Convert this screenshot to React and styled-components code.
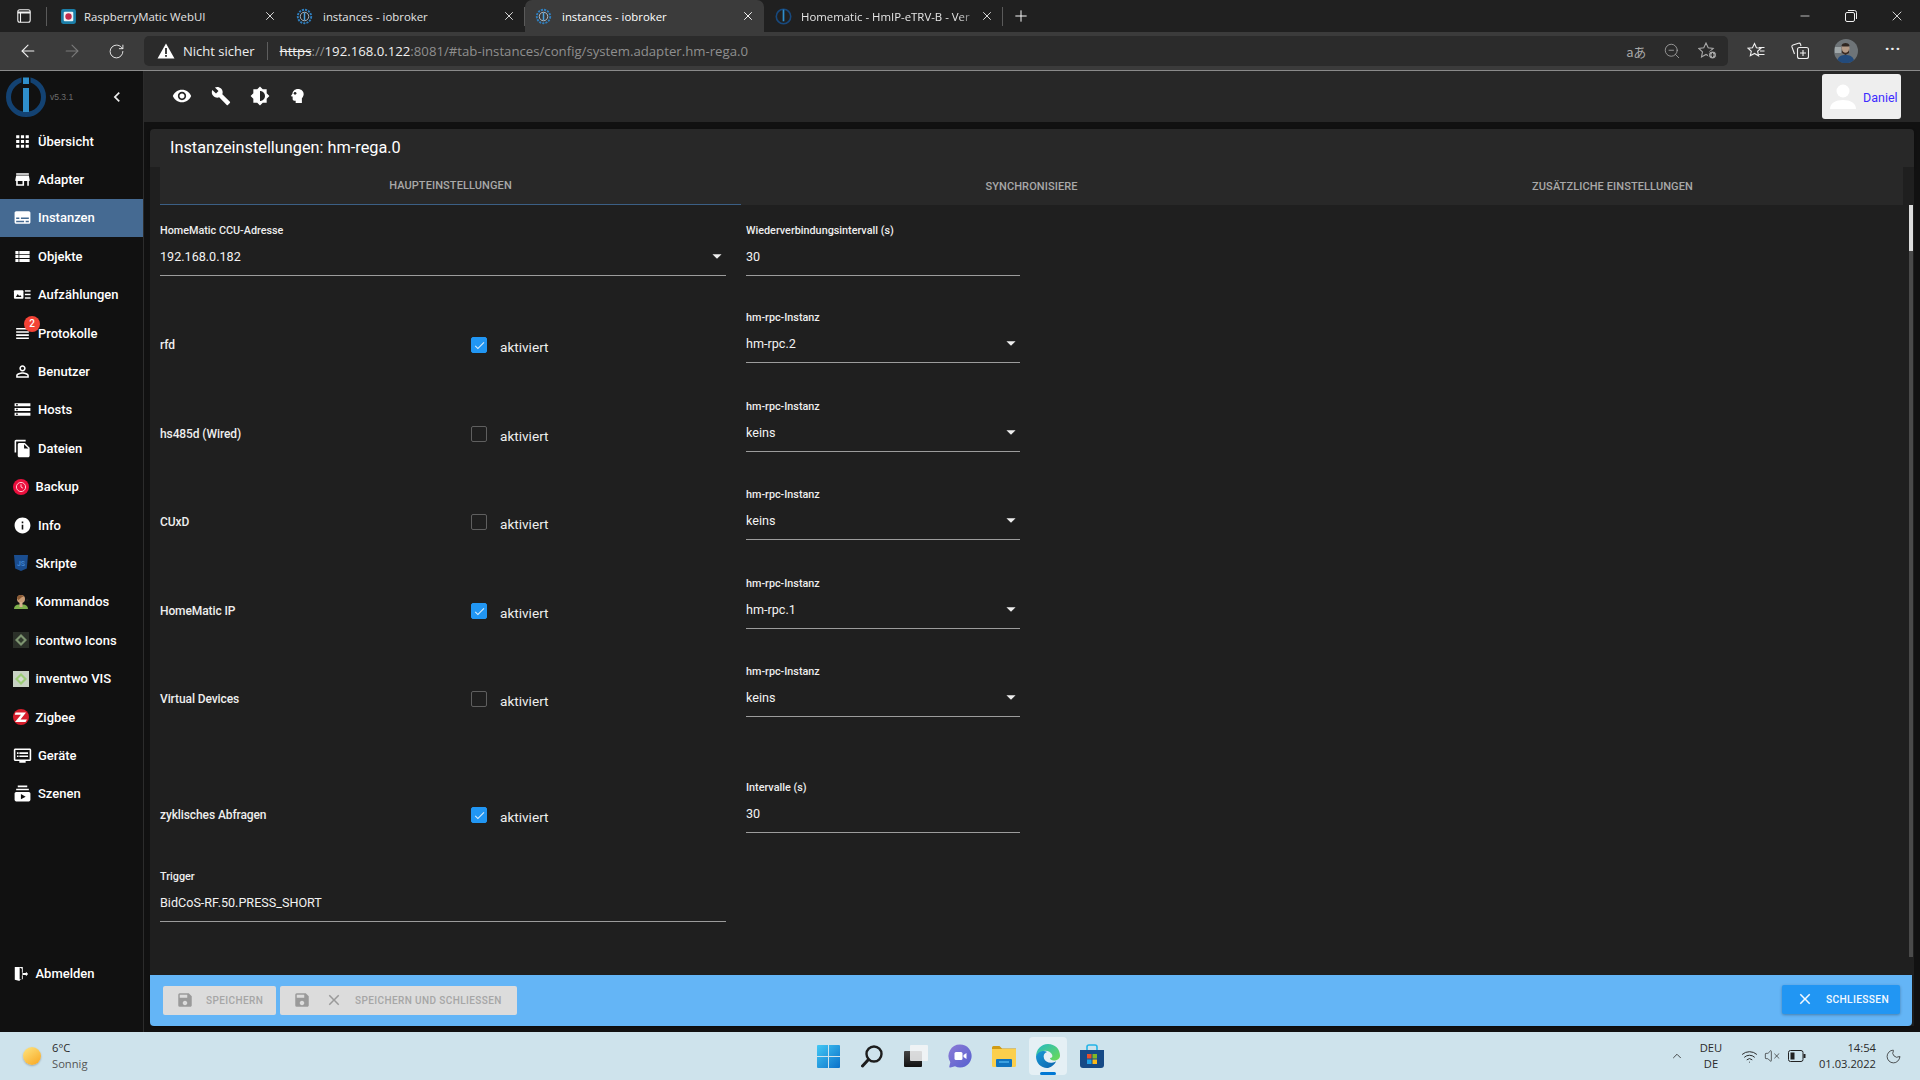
import React from 'react';
import styled, { createGlobalStyle } from 'styled-components';
import {
  MdApps, MdStore, MdSubtitles, MdViewList, MdViewHeadline, MdPersonOutline, MdStorage, MdFileCopy,
  MdInfo, MdDvr, MdSubscriptions, MdVisibility, MdBuild, MdBrightness6, MdSave, MdClose,
  MdArrowDropDown, MdChevronLeft, MdHistory, MdCheck,
} from 'react-icons/md';
import { ArrowLeft, ArrowRight, RotateCw, ZoomOut, Plus, Minus, X, ChevronUp, Wifi, VolumeX, Moon } from 'lucide-react';

const Global = createGlobalStyle`
  html, body { margin: 0; padding: 0; background: #111; }
  * { box-sizing: border-box; }
`;

const Screen = styled.div`
  width: 1920px; height: 1080px; overflow: hidden;
  display: flex; flex-direction: column;
  font-family: Roboto, "Liberation Sans", sans-serif; color: #fff; background: #111;
`;

/* ---------- browser chrome ---------- */
const TabStrip = styled.div`
  height: 32px; display: flex; align-items: stretch; background: #202020; flex: none;
  font-family: "Open Sans", sans-serif; font-size: 11.4px;
`;
const WindowMenu = styled.div`
  width: 47px; display: flex; align-items: center; justify-content: center; position: relative;
  &::after { content: ""; position: absolute; right: 0; top: 7px; height: 19px; width: 1px; background: #5a5a5a; }
`;
const Tab = styled.div`
  width: 239px; display: flex; align-items: center; padding: 0 9px 0 ${p => p.$pad || 13}px; position: relative;
  background: ${p => (p.$active ? '#3b3b3b' : 'transparent')};
  border-radius: ${p => (p.$active ? '7px 7px 0 0' : '0')};
  color: ${p => (p.$active ? '#fff' : '#e4e4e4')};
  &::after { content: ""; display: ${p => (p.$sep ? 'block' : 'none')}; position: absolute; right: 0; top: 7px; height: 19px; width: 1px; background: #5a5a5a; }
`;
const Favicon = styled.svg`width: 17px; height: 17px; flex: none;`;
const TabTitle = styled.span`
  flex: 1; margin-left: ${p => p.$ml || 10}px; white-space: nowrap; overflow: hidden;
  mask-image: ${p => (p.$fade ? 'linear-gradient(to right,#000 88%,transparent 100%)' : 'none')};
`;
const TabClose = styled(X)`width: 14px; height: 14px; flex: none; margin-right: 0; stroke-width: 1.6;`;
const NewTab = styled(Plus)`width: 18px; height: 18px; margin: 7px 0 0 9px; stroke-width: 1.3;`;
const WindowControls = styled.div`margin-left: auto; display: flex;`;
const WindowButton = styled.div`width: 46px; display: flex; align-items: center; justify-content: center;`;

const BrowserBar = styled.div`
  height: 39px; flex: none; display: flex; align-items: flex-start; padding: 4px 6px 0;
  background: #3b3b3b; border-bottom: 1px solid #8a8a8a; font-family: "Open Sans", sans-serif;
`;
const NavButton = styled.div`
  width: 44px; height: 30px; flex: none; display: flex; align-items: center; justify-content: center;
  margin-left: ${p => p.$ml || 0}px;
  color: ${p => (p.$off ? '#7a7a7a' : '#f0f0f0')};
`;
const AddressBar = styled.div`
  width: 1584px; height: 30px; flex: none; margin: 0 6px; background: #2b2b2b; border-radius: 5px;
  display: flex; align-items: center; padding-left: 13px; font-size: 13px;
`;
const SecurityText = styled.span`margin-left: 8px; color: #eee;`;
const AddressDivider = styled.span`width: 1px; height: 18px; background: #5e5e5e; margin: 0 12px;`;
const Url = styled.span`color: #8f8f8f; white-space: nowrap; font-size: 13.2px;`;
const UrlStrong = styled.span`color: #f0f0f0;`;
const UrlStrike = styled.span`color: #f0f0f0; text-decoration: line-through;`;
const AddressIcons = styled.div`margin-left: auto; display: flex; margin-right: 2px; color: #a8a8a8;`;
const AddressIcon = styled.div`width: 36px; height: 30px; display: flex; align-items: center; justify-content: center;`;
const TranslateGlyph = styled.span`font-family: "Noto Sans CJK JP", "Open Sans", sans-serif; font-size: 13px; letter-spacing: -.5px;`;
const Dots = styled.span`font-size: 15px; letter-spacing: 1px; font-weight: 700; margin-top: -7px;`;

/* ---------- ioBroker shell ---------- */
const AppRow = styled.div`flex: 1; min-height: 0; display: flex; background: #111;`;
const Sidebar = styled.nav`
  width: 144px; flex: none; background: #111; border-right: 1px solid #2c2c2c;
  display: flex; flex-direction: column; padding-bottom: 39px;
`;
const Brand = styled.div`height: 51px; flex: none; display: flex; align-items: center; padding-left: 6px; position: relative;`;
const Version = styled.span`font-size: 8.5px; color: #6d6d6d; margin-left: 4px; font-family: "Liberation Sans", sans-serif;`;
const Collapse = styled(MdChevronLeft)`width: 20px; height: 20px; margin-left: 34px; color: #eee;`;
const NavItem = styled.div`
  height: 38.4px; flex: none; display: flex; align-items: center;
  padding-left: ${p => (p.$image ? 13 : 13)}px; font-size: 13px; font-weight: 500; position: relative; white-space: nowrap;
  margin-top: ${p => (p.$bottom ? 'auto' : '0')};
  background: ${p => (p.$active ? '#456a92' : 'transparent')};
`;
const NavGlyph = styled.span`
  width: ${p => (p.$image ? 16 : 19)}px; height: 20px; flex: none; margin-right: ${p => (p.$image ? 6.5 : 6)}px;
  display: flex; align-items: center; justify-content: center; font-size: 19px; color: #fff;
`;
const Badge = styled.span`
  position: absolute; left: 24px; top: 2px; width: 16px; height: 16px; border-radius: 50%;
  background: #f44336; font-size: 10px; display: flex; align-items: center; justify-content: center; font-weight: 500;
`;

const Main = styled.main`flex: 1; min-width: 0; display: flex; flex-direction: column;`;
const TopBar = styled.div`
  height: 51px; flex: none; background: #272727; display: flex; align-items: center; padding: 0 19px 1px 28px;
`;
const TopIcon = styled.span`width: 39px; height: 24px; display: flex; align-items: center; justify-content: flex-start; font-size: 20px;`;
const UserButton = styled.div`
  margin-left: auto; width: 79px; height: 45px; background: #eee; border-radius: 3px;
  display: flex; align-items: center; color: #3d2cff; font-size: 12.5px; padding-left: 7px;
`;
const UserName = styled.span`margin-left: 6px; margin-top: 2px;`;

const Content = styled.div`flex: 1; min-height: 0; display: flex; flex-direction: column; padding: 7px 6px 6px 6px;`;
const CardTitle = styled.div`
  height: 38px; flex: none; background: #282828; border-radius: 4px 4px 0 0; padding: 0 0 2px 20px;
  display: flex; align-items: center; font-size: 16.3px; box-shadow: 0 1px 3px rgba(0,0,0,.3); position: relative;
`;
const CardBody = styled.div`flex: 1; min-height: 0; background: #1f1f1f; padding-left: 10px; position: relative;`;
const Tabs = styled.div`display: grid; grid-template-columns: repeat(3, 1fr); width: 1743px; height: 38px; background: #282828;`;
const TabButton = styled.div`
  display: flex; align-items: center; justify-content: center; font-size: 11px; font-weight: 500; color: #a9a9a9;
  letter-spacing: .1px; border-bottom: ${p => (p.$active ? '1px solid #3b5f85' : '0')};
`;
const Form = styled.div`padding-top: 17px;`;
const FormRow = styled.div`
  display: grid; grid-template-columns: 566px 274px; column-gap: 20px; height: 54px; margin-top: ${p => p.$mt || 0}px;
`;
const Field = styled.div`display: flex; flex-direction: column; height: 54px;`;
const FieldLabel = styled.div`height: 16px; line-height: 18px; font-size: 10.8px; font-weight: 500; color: #eee; white-space: nowrap;`;
const FieldValue = styled.div`
  height: 38px; display: flex; align-items: center; justify-content: space-between; padding-bottom: 1px;
  font-size: 12.6px; color: #f2f2f2; border-bottom: 1px solid #9c9c9c;
`;
const Caret = styled(MdArrowDropDown)`width: 22px; height: 22px; color: #eee; margin-right: -2px;`;
const ToggleRow = styled.div`display: grid; grid-template-columns: 311px 16px auto; align-items: start;`;
const ToggleName = styled.div`padding-top: 27px; line-height: 18px; font-size: 12px; color: #eee; font-weight: 500; letter-spacing: -.1px;`;
const Check = styled.div`
  width: 16px; height: 16px; margin-top: 28px; border-radius: 2px; display: flex; align-items: center; justify-content: center;
  background: ${p => (p.$on ? '#2196f3' : 'transparent')}; border: 1px solid ${p => (p.$on ? '#2196f3' : '#5f5f5f')};
`;
const Tick = styled(MdCheck)`width: 13px; height: 13px; color: #d8ecfb;`;
const ToggleText = styled.div`margin: 30px 0 0 13px; line-height: 16px; font-size: 13.6px; color: #eee;`;
const Scrollbar = styled.div`position: absolute; right: 1px; top: 38px; bottom: 69px; width: 4px; background: #4a4a4a;`;
const ScrollThumb = styled.div`height: 46px; background: #dcdcdc;`;

const Footer = styled.div`
  position: absolute; left: 0; right: 2px; bottom: 0; height: 51px; background: #64b5f6; border-radius: 0 0 4px 4px;
  display: flex; align-items: flex-start; padding: 11px 12px 0 13px; gap: 4px; box-shadow: 0 1px 2px rgba(0,0,0,.4);
`;
const GhostButton = styled.div`
  height: 29px; width: ${p => p.$w}px; background: #dcdcdc; border-radius: 2px; color: #a6a6a6; display: flex; align-items: center; padding: 0 0 1px 13px;
  font-size: 10px; letter-spacing: .4px; font-weight: 500; white-space: nowrap;
`;
const GhostLabel = styled.span`margin-left: ${p => p.$ml}px;`;
const GhostCross = styled(MdClose)`width: 18px; height: 18px; color: #9a9a9a; margin-left: 14px; flex: none;`;
const CloseButton = styled.div`
  margin-left: auto; height: 29px; width: 118px; margin-top: -1px; background: #2196f3; border-radius: 2px; color: #f4f9ff;
  display: flex; align-items: center; padding: 0 0 1px 14px; font-size: 10.2px; letter-spacing: .35px; font-weight: 500;
  box-shadow: 0 1px 3px rgba(0,0,0,.3);
`;

/* ---------- taskbar ---------- */
const Taskbar = styled.div`
  height: 48px; flex: none; background: #cee3ec; display: grid; grid-template-columns: 1fr auto 1fr; align-items: center;
  font-family: "Open Sans", sans-serif; color: #2a2a2a; font-size: 11.2px;
`;
const Weather = styled.div`display: flex; align-items: center; padding-left: 23px;`;
const Sun = styled.div`width: 18px; height: 18px; border-radius: 50%; background: linear-gradient(145deg,#fde682,#f9a51f); box-shadow: 0 1px 2px rgba(0,0,0,.25);`;
const TwoLines = styled.div`display: flex; flex-direction: column; line-height: 16px; margin-left: ${p => p.$ml || 0}px; text-align: ${p => p.$align || 'left'}; width: ${p => p.$w || 'auto'};`;
const Muted = styled.span`color: #555;`;
const Dock = styled.div`display: flex;`;
const DockSlot = styled.div`
  width: 38px; height: 38px; margin: 0 3px; display: flex; align-items: center; justify-content: center; border-radius: 4px; position: relative;
  background: ${p => (p.$active ? '#e5f0f5' : 'transparent')};
  &::after { content: ""; display: ${p => (p.$active ? 'block' : 'none')}; position: absolute; bottom: 0; left: 11px; width: 16px; height: 3px; border-radius: 2px; background: #0078d4; }
`;
const Tray = styled.div`display: flex; align-items: center; justify-content: flex-end; padding-right: 18px;`;
const TrayIcon = styled.span`width: ${p => p.$w}px; margin-left: ${p => p.$ml}px; display: flex; justify-content: center;`;

/* ---------- drawings ---------- */
const BrokerIcon = () => (
  <Favicon viewBox="0 0 16 16">
    <circle cx="8" cy="8" r="6.3" fill="none" stroke="#2f7fbf" strokeWidth="1.8" strokeDasharray="2 1" />
    <circle cx="8" cy="8" r="4" fill="none" stroke="#d8e6f2" strokeWidth=".7" />
    <rect x="7.3" y="4.5" width="1.4" height="7" fill="#4aa3e0" />
  </Favicon>
);
const RaspIcon = () => (
  <Favicon viewBox="0 0 16 16">
    <rect x="1" y="1" width="14" height="14" rx="2" fill="#1b7ea8" />
    <rect x="3.5" y="3.5" width="9" height="9" rx="1" fill="#eef3f6" />
    <circle cx="8" cy="8" r="3" fill="#c22a4b" />
  </Favicon>
);
const HomematicIcon = () => (
  <Favicon viewBox="0 0 16 16">
    <circle cx="8" cy="8" r="6.8" fill="none" stroke="#17497e" strokeWidth="1.5" />
    <rect x="7.2" y="1.5" width="1.6" height="11" fill="#2f8fcb" />
  </Favicon>
);
const Logo = () => (
  <svg width="40" height="40" viewBox="0 0 40 40">
    <circle cx="20" cy="20" r="17.5" fill="none" stroke="#134272" strokeWidth="5" />
    <rect x="15.5" y="0" width="9" height="6" fill="#111" />
    <rect x="17" y="11" width="6" height="24" fill="#2f8fcb" />
    <rect x="17" y="0.5" width="6" height="6.5" fill="#2f8fcb" />
  </svg>
);
const Enums = () => (
  <svg width="20" height="20" viewBox="0 0 20 20" fill="#fff">
    <rect x="1" y="5" width="10" height="9" rx="1" />
    <path d="M3 12l2-3 1.5 2 1-1 1.5 2z" fill="#111" />
    <rect x="12.5" y="5" width="6" height="1.5" /><rect x="12.5" y="8.7" width="6" height="1.5" /><rect x="12.5" y="12.4" width="6" height="1.5" />
  </svg>
);
const BackupIcon = () => (
  <svg width="16" height="16" viewBox="0 0 16 16">
    <circle cx="8" cy="8" r="8" fill="#ea0f3d" />
    <circle cx="8" cy="8" r="4.6" fill="none" stroke="#ffc9d3" strokeWidth="1" />
    <path d="M8 5.3V8l2 1.2" fill="none" stroke="#ffc9d3" strokeWidth="1" />
  </svg>
);
const JsIcon = () => (
  <svg width="14" height="16" viewBox="0 0 14 16">
    <path d="M0 0h14l-1.2 13.5L7 16l-5.800-2.500z" fill="#1a4d8f" />
    <text x="7" y="10.500" textAnchor="middle" fontSize="7" fontWeight="700" fontFamily="Roboto, sans-serif" fill="#3f83d0">JS</text>
  </svg>
);
const CommandIcon = () => (
  <svg width="16" height="16" viewBox="0 0 16 16">
    <circle cx="8" cy="5" r="4" fill="#c89c76" />
    <path d="M4 4.500C4 1 8 0 11 2.500L9 3 5.500 6z" fill="#8b5a34" />
    <path d="M1 15c0-3 2-4.500 5-4.500h4c3 0 5 1.500 5 4.500z" fill="#7fb04d" />
    <rect x="6.500" y="8" width="3" height="5" fill="#d6b08d" />
    <circle cx="14" cy="6" r="1.500" fill="#1c1c1c" />
  </svg>
);
const TwoIcon = ({ light }) => (
  <svg width="16" height="16" viewBox="0 0 16 16">
    <rect width="16" height="16" fill={light ? '#c8d2c4' : '#2b3029'} />
    <path d="M8 2l6 6-6 6-6-6z" fill={light ? '#9dcd79' : '#7d9470'} />
    <path d="M8 5l3 3-3 3-3-3z" fill={light ? '#d4dcd0' : '#303a2d'} />
  </svg>
);
const ZigbeeIcon = () => (
  <svg width="16" height="16" viewBox="0 0 16 16">
    <circle cx="8" cy="8" r="8" fill="#d81e2c" />
    <path d="M2.500 3.500H13L7.500 10.500H14L12.500 13H2L8 5.800H1.800z" fill="#fff" />
  </svg>
);
const LogoutIcon = () => (
  <svg width="18" height="18" viewBox="0 0 18 18" fill="#fff">
    <path d="M2 1h9v6.500h-1V3L7.500 1.800V16l2.500-1.500v-4h1V15H7.500v2L2 15.500z" />
    <path d="M11 8.500h4V7l2.500 2.500L15 12v-1.500h-4z" transform="translate(-.5 -.5)" />
  </svg>
);
const HeadIcon = () => (
  <svg width="16" height="20" viewBox="0 0 18 20" fill="#fff">
    <path d="M10 2C6.500 2 4 4.500 3.900 7.500L2.500 9.500c-.3.5 0 1 .5 1h1.100v3c0 1 .8 1.800 1.800 1.800H7.500V18h7v-5.600C16 11.200 16.500 9.200 16.500 7.800 16.500 4.500 13.800 2 10 2z" />
    <circle cx="6.800" cy="7" r="1.500" fill="#272727" />
  </svg>
);
const Warning = () => (
  <svg width="18" height="16" viewBox="0 0 18 16">
    <path d="M9 .5L17.500 15.500H.5z" fill="#fff" />
    <rect x="8.100" y="5" width="1.800" height="6" fill="#2b2b2b" /><rect x="8.100" y="12" width="1.800" height="1.800" fill="#2b2b2b" />
  </svg>
);
const WindowGlyph = () => (
  <svg width="14" height="14" viewBox="0 0 14 14" fill="none" stroke="#f0f0f0" strokeWidth="1.1">
    <rect x=".8" y=".8" width="12.400" height="12.400" rx="2" /><path d="M.8 3.500h12.400" strokeWidth="2" /><path d="M3.500 3.500v9.700" />
  </svg>
);
const Restore = () => (
  <svg width="12" height="12" viewBox="0 0 12 12" fill="none" stroke="#f0f0f0" strokeWidth="1">
    <rect x=".5" y="2.500" width="9" height="9" rx="1.500" /><path d="M3 .5h6.500A2 2 0 0 1 11.500 2.500V9" />
  </svg>
);
const StarAdd = () => (
  <svg width="20" height="18" viewBox="0 0 20 18" fill="none" stroke="#a8a8a8" strokeWidth="1.100">
    <path d="M8 1l2.200 4.800 5 .6-3.700 3.500 1 5.100L8 12.500 3.500 15l1-5.100L.8 6.400l5-.6z" />
    <circle cx="14.500" cy="13" r="4" fill="#a8a8a8" stroke="#2b2b2b" />
    <path d="M14.500 11v4M12.500 13h4" stroke="#2b2b2b" />
  </svg>
);
const Favorites = () => (
  <svg width="18" height="18" viewBox="0 0 18 18" fill="none" stroke="#f0f0f0" strokeWidth="1.100">
    <path d="M7.500 1.500l1.900 4.200 4.600.5-3.400 3.100 1 4.500L7.500 11.500 3.300 13.800l1-4.500L.9 6.200l4.600-.5z" />
    <path d="M12 5.500h5.500M13 9h4.500M12 12.500h5.500" />
  </svg>
);
const Collections = () => (
  <svg width="18" height="18" viewBox="0 0 18 18" fill="none" stroke="#f0f0f0" strokeWidth="1.100">
    <path d="M3.500 12L1 5c-.3-1 .1-1.700 1-2l5.500-1.800c1-.3 1.700.1 2 1L10 4" />
    <rect x="6.500" y="5.500" width="11" height="11" rx="2" /><path d="M12 8v6M9 11h6" />
  </svg>
);
const Avatar = () => (
  <svg width="24" height="24" viewBox="0 0 24 24">
    <circle cx="12" cy="12" r="12" fill="#6e7478" />
    <rect x="1" y="8" width="6" height="6" fill="#9fa6a8" />
    <ellipse cx="11.500" cy="9.500" rx="4" ry="5" fill="#b49a86" />
    <path d="M8 10c0 5 7 5 7 0v4l-3.500 2-3.500-2z" fill="#3a2a22" />
    <path d="M7.500 7c0-4 8-4 8 0l-1 .5H8.500z" fill="#2e2622" />
    <path d="M3.500 21c1-4 4-5 8-5s7 1 8.500 5a12 12 0 0 1-16.500 0z" fill="#234b7c" />
  </svg>
);
const UserSilhouette = () => (
  <svg width="28" height="28" viewBox="0 0 28 28" fill="#fff">
    <circle cx="14" cy="9" r="6.500" /><path d="M1 27c0-6 6-9 13-9s13 3 13 9z" />
  </svg>
);
const WinLogo = () => (
  <svg width="23" height="23" viewBox="0 0 23 23">
    <defs><linearGradient id="w" x1="0" y1="0" x2="1" y2="1"><stop offset="0" stopColor="#42c8f5" /><stop offset="1" stopColor="#0a70c9" /></linearGradient></defs>
    <path d="M0 1a1 1 0 0 1 1-1h10v11H0zM12 0h10a1 1 0 0 1 1 1v10H12zM0 12h11v11H1a1 1 0 0 1-1-1zM12 12h11v10a1 1 0 0 1-1 1H12z" fill="url(#w)" />
  </svg>
);
const SearchGlyph = () => (
  <svg width="22" height="23" viewBox="0 0 22 23" fill="none" stroke="#1d1d1d">
    <circle cx="13" cy="9" r="7.500" strokeWidth="2.400" /><path d="M7.500 14.500L1.500 21" strokeWidth="3" strokeLinecap="round" />
  </svg>
);
const TaskView = () => (
  <svg width="24" height="23" viewBox="0 0 24 23">
    <defs><linearGradient id="t1" x1="0" y1="0" x2="0" y2="1"><stop offset="0" stopColor="#444" /><stop offset="1" stopColor="#111" /></linearGradient></defs>
    <rect x="0" y="6" width="18" height="16" rx="1" fill="url(#t1)" />
    <rect x="6" y="0" width="18" height="16" rx="1" fill="#f4f6f7" fillOpacity=".85" />
  </svg>
);
const ChatIcon = () => (
  <svg width="24" height="24" viewBox="0 0 24 24">
    <defs><linearGradient id="c" x1="0" y1="0" x2="1" y2="1"><stop offset="0" stopColor="#8d7bd6" /><stop offset="1" stopColor="#5560cf" /></linearGradient></defs>
    <path d="M12 .5a11.500 11.500 0 1 1-5 21.800L2.500 23.500c-.8.200-1.300-.3-1.200-1l1-4.300A11.500 11.500 0 0 1 12 .5z" fill="url(#c)" />
    <rect x="6.500" y="8" width="8" height="8" rx="1.500" fill="#fff" /><path d="M15.500 11l3-2v6l-3-2z" fill="#fff" />
  </svg>
);
const FolderIcon = () => (
  <svg width="24" height="21" viewBox="0 0 24 21">
    <path d="M0 1.500A1.500 1.500 0 0 1 1.500 0h6L10 2.500h14V6H0z" fill="#d19b14" />
    <path d="M0 3h24v16.500a1.500 1.500 0 0 1-1.500 1.500h-21A1.500 1.500 0 0 1 0 19.500z" fill="#fbcf4c" />
    <rect x="4" y="13" width="16" height="8" rx="1" fill="#0f73bf" />
    <rect x="7" y="15" width="10" height="2" fill="#3aa0e0" />
  </svg>
);
const EdgeIcon = () => (
  <svg width="24" height="24" viewBox="0 0 24 24">
    <defs>
      <linearGradient id="e1" x1="0" y1="0" x2="1" y2="1"><stop offset="0" stopColor="#1a9ad6" /><stop offset="1" stopColor="#0a63ad" /></linearGradient>
      <linearGradient id="e2" x1="0" y1="0" x2="1" y2="1"><stop offset="0" stopColor="#23b9c7" /><stop offset="1" stopColor="#6fdc4f" /></linearGradient>
    </defs>
    <path d="M12 0c7 0 12 5 12 11.500 0 3.500-3 5-6 5-2.500 0-4-1-4-2.500 2 0 3-1.500 2-3.500C14.500 7 9 5.500 5 8 2.500 9.500 1 11 0 13 0 5.500 5 0 12 0z" fill="url(#e2)" />
    <path d="M0 12.500C2 7 8 6 11 8c-3 1-4 3.500-3 6.500 1 3 5 5 9 4 1.500-.3 2.500-1 3-1-2 4-6 6.500-9 6.500-6 0-11-5-11-11.500z" fill="url(#e1)" />
  </svg>
);
const StoreIcon = () => (
  <svg width="24" height="24" viewBox="0 0 24 24">
    <path d="M7 6V3a2 2 0 0 1 2-2h6a2 2 0 0 1 2 2v3" fill="none" stroke="#25b4e6" strokeWidth="1.600" />
    <path d="M0 6h24v15a3 3 0 0 1-3 3H3a3 3 0 0 1-3-3z" fill="#164a86" />
    <rect x="7" y="10" width="4.500" height="4.500" fill="#e8502a" /><rect x="12.500" y="10" width="4.500" height="4.500" fill="#80b827" />
    <rect x="7" y="15.500" width="4.500" height="4.500" fill="#1e9fe4" /><rect x="12.500" y="15.500" width="4.500" height="4.500" fill="#fbb918" />
  </svg>
);
const Battery = () => (
  <svg width="18" height="12" viewBox="0 0 18 12" fill="none" stroke="#222" strokeWidth="1">
    <rect x=".5" y=".5" width="14.500" height="11" rx="2" /><rect x="2.500" y="2.500" width="4" height="7" fill="#222" stroke="none" />
    <rect x="15.500" y="4" width="2" height="4" fill="#222" stroke="none" />
  </svg>
);

const navItems = [
  { label: 'Übersicht', icon: <MdApps /> },
  { label: 'Adapter', icon: <MdStore /> },
  { label: 'Instanzen', icon: <MdSubtitles />, active: true },
  { label: 'Objekte', icon: <MdViewList /> },
  { label: 'Aufzählungen', icon: <Enums /> },
  { label: 'Protokolle', icon: <MdViewHeadline />, badge: 2 },
  { label: 'Benutzer', icon: <MdPersonOutline /> },
  { label: 'Hosts', icon: <MdStorage /> },
  { label: 'Dateien', icon: <MdFileCopy /> },
  { label: 'Backup', icon: <BackupIcon />, image: true },
  { label: 'Info', icon: <MdInfo /> },
  { label: 'Skripte', icon: <JsIcon />, image: true },
  { label: 'Kommandos', icon: <CommandIcon />, image: true },
  { label: 'icontwo Icons', icon: <TwoIcon />, image: true },
  { label: 'inventwo VIS', icon: <TwoIcon light />, image: true },
  { label: 'Zigbee', icon: <ZigbeeIcon />, image: true },
  { label: 'Geräte', icon: <MdDvr /> },
  { label: 'Szenen', icon: <MdSubscriptions /> },
];

const rows = [
  { mt: 33, name: 'rfd', on: true, label: 'hm-rpc-Instanz', value: 'hm-rpc.2', select: true },
  { mt: 35, name: 'hs485d (Wired)', label: 'hm-rpc-Instanz', value: 'keins', select: true },
  { mt: 34, name: 'CUxD', label: 'hm-rpc-Instanz', value: 'keins', select: true },
  { mt: 35, name: 'HomeMatic IP', on: true, label: 'hm-rpc-Instanz', value: 'hm-rpc.1', select: true },
  { mt: 34, name: 'Virtual Devices', label: 'hm-rpc-Instanz', value: 'keins', select: true },
  { mt: 62, name: 'zyklisches Abfragen', on: true, label: 'Intervalle (s)', value: '30' },
];

const InputField = ({ label, value, select }) => (
  <Field>
    <FieldLabel>{label}</FieldLabel>
    <FieldValue>{value}{select && <Caret />}</FieldValue>
  </Field>
);

export default function App() {
  return (
    <Screen>
      <Global />
      <TabStrip>
        <WindowMenu><WindowGlyph /></WindowMenu>
        <Tab><RaspIcon /><TabTitle $ml={7}>RaspberryMatic WebUI</TabTitle><TabClose /></Tab>
        <Tab $sep $pad={10}><BrokerIcon /><TabTitle $ml={10}>instances - iobroker</TabTitle><TabClose /></Tab>
        <Tab $active $pad={10}><BrokerIcon /><TabTitle $ml={10}>instances - iobroker</TabTitle><TabClose /></Tab>
        <Tab $sep $pad={11}><HomematicIcon /><TabTitle $fade $ml={9}>Homematic - HmIP-eTRV-B - Ver</TabTitle><TabClose /></Tab>
        <NewTab />
        <WindowControls>
          <WindowButton><Minus size={14} strokeWidth={1.2} /></WindowButton>
          <WindowButton><Restore /></WindowButton>
          <WindowButton><X size={16} strokeWidth={1.2} /></WindowButton>
        </WindowControls>
      </TabStrip>
      <BrowserBar>
        <NavButton><ArrowLeft size={20} strokeWidth={1.3} /></NavButton>
        <NavButton $off><ArrowRight size={20} strokeWidth={1.3} /></NavButton>
        <NavButton><RotateCw size={17} strokeWidth={1.3} /></NavButton>
        <AddressBar>
          <Warning />
          <SecurityText>Nicht sicher</SecurityText>
          <AddressDivider />
          <Url><UrlStrike>https</UrlStrike>://<UrlStrong>192.168.0.122</UrlStrong>:8081/#tab-instances/config/system.adapter.hm-rega.0</Url>
          <AddressIcons>
            <AddressIcon><TranslateGlyph>aあ</TranslateGlyph></AddressIcon>
            <AddressIcon><ZoomOut size={18} strokeWidth={1.1} /></AddressIcon>
            <AddressIcon><StarAdd /></AddressIcon>
          </AddressIcons>
        </AddressBar>
        <NavButton><Favorites /></NavButton>
        <NavButton><Collections /></NavButton>
        <NavButton $ml={2}><Avatar /></NavButton>
        <NavButton $ml={3}><Dots>···</Dots></NavButton>
      </BrowserBar>

      <AppRow>
        <Sidebar>
          <Brand><Logo /><Version>v5.3.1</Version><Collapse /></Brand>
          {navItems.map(item => (
            <NavItem key={item.label} $active={item.active} $image={item.image}>
              <NavGlyph $image={item.image}>{item.icon}</NavGlyph>
              {item.label}
              {item.badge && <Badge>{item.badge}</Badge>}
            </NavItem>
          ))}
          <NavItem $bottom $image>
            <NavGlyph $image><LogoutIcon /></NavGlyph>
            Abmelden
          </NavItem>
        </Sidebar>
        <Main>
          <TopBar>
            <TopIcon><MdVisibility /></TopIcon>
            <TopIcon><MdBuild /></TopIcon>
            <TopIcon><MdBrightness6 /></TopIcon>
            <TopIcon><HeadIcon /></TopIcon>
            <UserButton><UserSilhouette /><UserName>Daniel</UserName></UserButton>
          </TopBar>
          <Content>
            <CardTitle>Instanzeinstellungen: hm-rega.0</CardTitle>
            <CardBody>
              <Tabs>
                <TabButton $active>HAUPTEINSTELLUNGEN</TabButton>
                <TabButton>SYNCHRONISIERE</TabButton>
                <TabButton>ZUSÄTZLICHE EINSTELLUNGEN</TabButton>
              </Tabs>
              <Form>
                <FormRow>
                  <InputField label="HomeMatic CCU-Adresse" value="192.168.0.182" select />
                  <InputField label="Wiederverbindungsintervall (s)" value="30" />
                </FormRow>
                {rows.map(row => (
                  <FormRow key={row.name} $mt={row.mt}>
                    <ToggleRow>
                      <ToggleName>{row.name}</ToggleName>
                      <Check $on={row.on}>{row.on && <Tick />}</Check>
                      <ToggleText>aktiviert</ToggleText>
                    </ToggleRow>
                    <InputField label={row.label} value={row.value} select={row.select} />
                  </FormRow>
                ))}
                <FormRow $mt={35}>
                  <InputField label="Trigger" value="BidCoS-RF.50.PRESS_SHORT" />
                </FormRow>
              </Form>
              <Scrollbar><ScrollThumb /></Scrollbar>
              <Footer>
                <GhostButton $w={113}><MdSave size={18} color="#9a9a9a" /><GhostLabel $ml={12}>SPEICHERN</GhostLabel></GhostButton>
                <GhostButton $w={237}>
                  <MdSave size={18} color="#9a9a9a" />
                  <GhostCross />
                  <GhostLabel $ml={12}>SPEICHERN UND SCHLIESSEN</GhostLabel>
                </GhostButton>
                <CloseButton><MdClose size={18} /><GhostLabel $ml={12}>SCHLIESSEN</GhostLabel></CloseButton>
              </Footer>
            </CardBody>
          </Content>
        </Main>
      </AppRow>

      <Taskbar>
        <Weather>
          <Sun />
          <TwoLines $ml={11}><span>6°C</span><Muted>Sonnig</Muted></TwoLines>
        </Weather>
        <Dock>
          <DockSlot><WinLogo /></DockSlot>
          <DockSlot><SearchGlyph /></DockSlot>
          <DockSlot><TaskView /></DockSlot>
          <DockSlot><ChatIcon /></DockSlot>
          <DockSlot><FolderIcon /></DockSlot>
          <DockSlot $active><EdgeIcon /></DockSlot>
          <DockSlot><StoreIcon /></DockSlot>
        </Dock>
        <Tray>
          <TrayIcon $w={14} $ml={0}><ChevronUp size={18} strokeWidth={1.4} /></TrayIcon>
          <TwoLines $ml={12} $align="center" $w="30px"><span>DEU</span><span>DE</span></TwoLines>
          <TrayIcon $w={18} $ml={14}><Wifi size={17} strokeWidth={1.4} /></TrayIcon>
          <TrayIcon $w={16} $ml={6}><VolumeX size={16} strokeWidth={1.1} /></TrayIcon>
          <TrayIcon $w={18} $ml={8}><Battery /></TrayIcon>
          <TwoLines $ml={10} $align="right" $w="60px"><span>14:54</span><span>01.03.2022</span></TwoLines>
          <TrayIcon $w={18} $ml={8}><Moon size={17} strokeWidth={1.1} /></TrayIcon>
        </Tray>
      </Taskbar>
    </Screen>
  );
}
